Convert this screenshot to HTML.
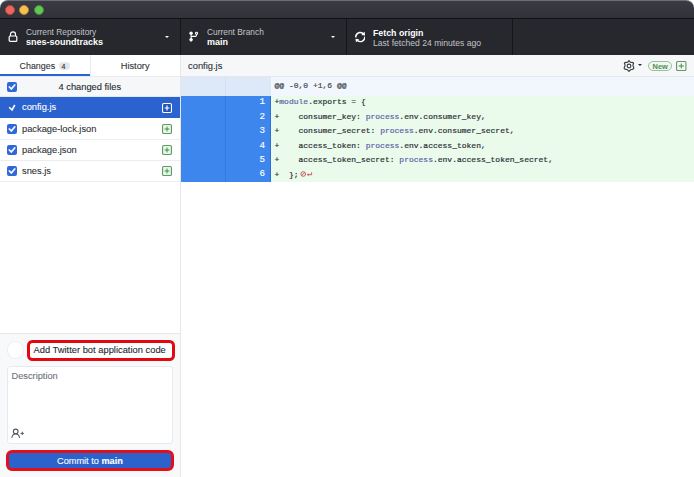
<!DOCTYPE html>
<html><head><meta charset="utf-8">
<style>
*{box-sizing:border-box;margin:0;padding:0}
html,body{width:694px;height:477px;overflow:hidden;background:#fff;font-family:"Liberation Sans",sans-serif}
.abs{position:absolute}
#titlebar{left:0;top:0;width:694px;height:18px;background:linear-gradient(#3a3b43,#30313a);border-top:1px solid #6c6d73;border-radius:8px 8px 0 0}
.tl{position:absolute;top:4.2px;width:10px;height:10px;border-radius:50%}
#toolbar{left:0;top:18px;width:694px;height:37px;background:#26282d;border-top:1px solid #121215}
.div{position:absolute;top:0;width:1px;height:36px;background:#141518}
.tb-t1{position:absolute;color:#c2c4c8;font-size:8.4px;white-space:nowrap}
.tb-t2{position:absolute;color:#fff;font-size:9px;font-weight:bold;white-space:nowrap}
.caret{position:absolute;width:0;height:0;border-left:3px solid transparent;border-right:3px solid transparent;border-top:3px solid #fff}
#left{left:0;top:55px;width:180px;height:422px;background:#fff}
#border{left:180px;top:55px;width:1px;height:422px;background:#e6e7ea}
.txt{position:absolute;white-space:nowrap;-webkit-text-stroke:0.1px currentColor}
.cb{position:absolute;width:9.7px;height:10.3px;background:#3068dc;border-radius:2px}
.cb svg{position:absolute;left:0;top:0}
.plus{position:absolute;width:10px;height:10px;border:1.1px solid #5f9a62;border-radius:1.5px;background:#e9f6ea}
.plus:before{content:"";position:absolute;left:1.6px;top:3.4px;width:4.6px;height:1.2px;background:#3f9a48}
.plus:after{content:"";position:absolute;left:3.3px;top:1.7px;width:1.2px;height:4.6px;background:#3f9a48}
.plus.sel{border-color:#fff;background:#2353b8}
.plus.sel:before,.plus.sel:after{background:#fff}
.row{position:absolute;left:0;width:180px;height:21px;border-bottom:1px solid #ebedf0}
.code{position:absolute;left:274.5px;font-family:"Liberation Mono",monospace;font-size:8px;color:#2c3035;white-space:pre;-webkit-text-stroke:0.2px currentColor}
.ln{position:absolute;left:226px;width:39px;text-align:right;font-family:"Liberation Mono",monospace;font-size:9.2px;color:#fff;-webkit-text-stroke:0.15px #fff}
.kw{color:#5f5fa8}
</style></head><body>
<div id="titlebar" class="abs">
  <div class="tl" style="left:5.2px;background:#f0665c;border:0.6px solid #b8473e"></div>
  <div class="tl" style="left:19px;background:#f5c04f;border:0.6px solid #b98a2a"></div>
  <div class="tl" style="left:33.5px;background:#62c554;border:0.6px solid #3e8f33"></div>
</div>
<div id="toolbar" class="abs">
  <!-- repo -->
  <svg class="abs" style="left:8px;top:12px" width="10" height="11" viewBox="0 0 10 11"><path d="M2.5 5V3.3a2.5 2.5 0 0 1 5 0V5" fill="none" stroke="#fff" stroke-width="1.2"/><rect x="1.2" y="5" width="7.6" height="5.4" rx="1" fill="none" stroke="#fff" stroke-width="1.2"/></svg>
  <div class="tb-t1" style="left:26px;top:8.2px">Current Repository</div>
  <div class="tb-t2" style="left:26px;top:17.6px">snes-soundtracks</div>
  <div class="caret" style="left:164.8px;top:16.8px;border-left-width:2.3px;border-right-width:2.3px;border-top-width:2.6px"></div>
  <div class="div" style="left:180px"></div>
  <!-- branch -->
  <svg class="abs" style="left:187.9px;top:12.1px" width="11.6" height="11.1" viewBox="0 0 16 16" preserveAspectRatio="none"><path fill="#fff" d="M9.5 3.25a2.25 2.25 0 1 1 3 2.122V6A2.5 2.5 0 0 1 10 8.5H6a1 1 0 0 0-1 1v1.128a2.251 2.251 0 1 1-1.5 0V5.372a2.25 2.25 0 1 1 1.5 0v1.836A2.493 2.493 0 0 1 6 7h4a1 1 0 0 0 1-1v-.628A2.25 2.25 0 0 1 9.5 3.25Zm-6 0a.75.75 0 1 0 1.5 0 .75.75 0 0 0-1.5 0Zm8.25-.75a.75.75 0 1 0 0 1.5.75.75 0 0 0 0-1.5ZM4.25 12a.75.75 0 1 0 0 1.5.75.75 0 0 0 0-1.5Z"/><circle cx="4.25" cy="3.25" r="1.6" fill="#fff"/><circle cx="4.25" cy="12.75" r="1.6" fill="#fff"/></svg>
  <div class="tb-t1" style="left:207px;top:8.2px">Current Branch</div>
  <div class="tb-t2" style="left:207px;top:17.6px">main</div>
  <div class="caret" style="left:330.8px;top:16.8px;border-left-width:2.3px;border-right-width:2.3px;border-top-width:2.6px"></div>
  <div class="div" style="left:346px"></div>
  <!-- fetch -->
  <svg class="abs" style="left:354.6px;top:11.2px" width="10.6" height="14.1" viewBox="0 0 12 16"><path fill="#fff" d="M10.24 7.4a4.15 4.15 0 0 1-1.2 3.6 4.346 4.346 0 0 1-5.41.54L4.8 10.4.5 9.8l.6 4.2 1.31-1.26c2.36 1.74 5.7 1.570 7.84-.54a5.876 5.876 0 0 0 1.740-4.46l-1.75-.34zM2.96 5a4.346 4.346 0 0 1 5.41-.54L7.2 5.6l4.3.6-.6-4.2-1.31 1.26c-2.36-1.74-5.7-1.57-7.85.54C.5 5.030-.06 6.650.01 8.260l1.75.35A4.17 4.17 0 0 1 2.96 5z"/></svg>
  <div class="tb-t2" style="left:373px;top:8.8px;font-size:8.8px">Fetch origin</div>
  <div class="tb-t1" style="left:373px;top:18.7px;font-size:8.6px">Last fetched 24 minutes ago</div>
  <div class="div" style="left:512px"></div>
</div>

<div id="left" class="abs">
  <!-- tabs -->
  <div class="abs" style="left:0;top:0;width:180px;height:22px;background:#fff;border-bottom:1.3px solid #e9eaed"></div>
  <div class="abs" style="left:0;top:18.8px;width:90px;height:2.2px;background:#2c63d2"></div>
  <div class="abs" style="left:89.5px;top:0;width:1px;height:21px;background:#e8eaed"></div>
  <div class="txt" style="left:19.6px;top:5.7px;font-size:8.9px;color:#2f3337">Changes</div>
  <div class="abs" style="left:58.6px;top:7.3px;width:11px;height:8px;border-radius:4px;background:#e4e6e9"></div>
  <div class="txt" style="left:61.5px;top:7.5px;font-size:7px;color:#24292e">4</div>
  <div class="txt" style="left:120.7px;top:5.8px;font-size:9.3px;color:#2f3337">History</div>
  <!-- header -->
  <div class="abs" style="left:0;top:22px;width:180px;height:20px;background:#f6f7f9;border-bottom:1px solid #e6e8eb"></div>
  <div class="cb" style="left:7px;top:26.7px"><svg width="10" height="10" viewBox="0 0 10 10"><path d="M2.4 5.0l1.9 2.0 3.4-4.0" fill="none" stroke="#f4fbff" stroke-width="1.8" stroke-linecap="round" stroke-linejoin="round"/></svg></div>
  <div class="txt" style="left:58.5px;top:26.5px;font-size:9.3px;color:#24292e">4 changed files</div>
  <!-- rows -->
  <div class="row" style="top:42px;background:#2a62d0;border-bottom:none"></div>
  <svg class="abs" style="left:7px;top:47.2px" width="10" height="10" viewBox="0 0 10 10"><path d="M2.2 5.2l2.8 2.8 2.8-5" fill="none" stroke="#fff" stroke-width="1.6"/></svg>
  <div class="txt" style="left:22px;top:47.4px;font-size:9.3px;color:#fff">config.js</div>
  <svg class="abs" style="left:162px;top:48px" width="10" height="10" viewBox="0 0 10 10"><rect x="0.55" y="0.55" width="8.9" height="8.9" rx="1.3" fill="#2353b8" stroke="#fff" stroke-width="1.1"/><path d="M5.0 2.6V7.4M2.6 5.0H7.4" stroke="#fff" stroke-width="1.2"/></svg>
  <div class="row" style="top:63.5px"></div>
  <div class="cb" style="left:7px;top:68.7px"><svg width="10" height="10" viewBox="0 0 10 10"><path d="M2.4 5.0l1.9 2.0 3.4-4.0" fill="none" stroke="#f4fbff" stroke-width="1.8" stroke-linecap="round" stroke-linejoin="round"/></svg></div>
  <div class="txt" style="left:22px;top:68.6px;font-size:9.3px;color:#2f3337">package-lock.json</div>
  <svg class="abs" style="left:162px;top:69px" width="10" height="10" viewBox="0 0 10 10"><rect x="0.55" y="0.55" width="8.9" height="8.9" rx="1.3" fill="#e9f6ea" stroke="#5f9a62" stroke-width="1.1"/><path d="M5.0 2.6V7.4M2.6 5.0H7.4" stroke="#3f8f47" stroke-width="1.0"/></svg>
  <div class="row" style="top:84.5px"></div>
  <div class="cb" style="left:7px;top:89.7px"><svg width="10" height="10" viewBox="0 0 10 10"><path d="M2.4 5.0l1.9 2.0 3.4-4.0" fill="none" stroke="#f4fbff" stroke-width="1.8" stroke-linecap="round" stroke-linejoin="round"/></svg></div>
  <div class="txt" style="left:22px;top:89.6px;font-size:9.3px;color:#2f3337">package.json</div>
  <svg class="abs" style="left:162px;top:90px" width="10" height="10" viewBox="0 0 10 10"><rect x="0.55" y="0.55" width="8.9" height="8.9" rx="1.3" fill="#e9f6ea" stroke="#5f9a62" stroke-width="1.1"/><path d="M5.0 2.6V7.4M2.6 5.0H7.4" stroke="#3f8f47" stroke-width="1.0"/></svg>
  <div class="row" style="top:105.5px"></div>
  <div class="cb" style="left:7px;top:110.7px"><svg width="10" height="10" viewBox="0 0 10 10"><path d="M2.4 5.0l1.9 2.0 3.4-4.0" fill="none" stroke="#f4fbff" stroke-width="1.8" stroke-linecap="round" stroke-linejoin="round"/></svg></div>
  <div class="txt" style="left:22px;top:110.6px;font-size:9.3px;color:#2f3337">snes.js</div>
  <svg class="abs" style="left:162px;top:111px" width="10" height="10" viewBox="0 0 10 10"><rect x="0.55" y="0.55" width="8.9" height="8.9" rx="1.3" fill="#e9f6ea" stroke="#5f9a62" stroke-width="1.1"/><path d="M5.0 2.6V7.4M2.6 5.0H7.4" stroke="#3f8f47" stroke-width="1.0"/></svg>

  <!-- commit area -->
  <div class="abs" style="left:0;top:278.2px;width:180px;height:144px;background:#f8f9fa;border-top:1px solid #e6e7e9"></div>
  <div class="abs" style="left:7px;top:286px;width:16.5px;height:17.5px;border-radius:50%;background:#fff;border:1px solid #eceef1"></div>
  <div class="abs" style="left:26.9px;top:284.8px;width:148.1px;height:20.8px;border:3.4px solid #e3070f;border-radius:5.5px;background:#fff"></div>
  <div class="txt" style="left:33.5px;top:290.3px;font-size:9.35px;color:#24292e">Add Twitter bot application code</div>
  <div class="abs" style="left:7px;top:310.8px;width:165.5px;height:78px;border:1px solid #e8eaed;border-radius:3px;background:#fff"></div>
  <div class="txt" style="left:11.5px;top:316px;font-size:9.25px;color:#6d7278">Description</div>
  <svg class="abs" style="left:11px;top:373px" width="14" height="11" viewBox="0 0 14 11"><circle cx="4.7" cy="3.4" r="2.3" fill="none" stroke="#555a60" stroke-width="1.1"/><path d="M0.9 9.4C1.3 6.9 2.8 6 4.7 6S8.1 6.9 8.5 9.4" fill="none" stroke="#555a60" stroke-width="1.1" stroke-linecap="round"/><path d="M9.6 5.4H12.9M11.25 3.75V7.05" stroke="#555a60" stroke-width="1"/></svg>
  <div class="abs" style="left:6.4px;top:395.3px;width:168px;height:20.9px;border:3.6px solid #e3101a;border-radius:6px;background:#2b62cc"></div>
  <div class="txt" style="left:57px;top:400.8px;font-size:9.2px;color:#fff;-webkit-text-stroke:0.1px #fff">Commit to <b>main</b></div>
</div>
<div id="border" class="abs"></div>

<!-- diff -->
<div class="abs" style="left:181px;top:55px;width:513px;height:22px;background:#f6f7f9;border-bottom:1px solid #e4e6ea"></div>
<div class="txt" style="left:188px;top:60px;font-size:9.4px;color:#2f3337">config.js</div>
<svg class="abs" style="left:622.6px;top:59.7px" width="12" height="12" viewBox="0 0 12 12"><path d="M6 0.7Q7.2 2.4 8.1 2.5Q10.2 2.2 10.6 3.35Q9.7 5.2 10.1 6Q11.1 7.8 10.6 8.65Q9.1 9.6 8.1 9.5Q6.9 10.3 6 11.3Q5.1 10.3 3.9 9.5Q2.9 9.6 1.4 8.65Q0.9 7.8 1.9 6Q2.3 5.2 1.4 3.35Q1.8 2.2 3.9 2.5Q4.8 2.4 6 0.7Z" fill="none" stroke="#3a3f45" stroke-width="1.2" stroke-linejoin="round"/><circle cx="6" cy="6" r="1.9" fill="none" stroke="#3a3f45" stroke-width="1.15"/></svg>
<div class="caret" style="left:638.4px;top:64.2px;border-top-color:#24292e;border-left-width:2.6px;border-right-width:2.6px;border-top-width:2.7px"></div>
<div class="abs" style="left:648.2px;top:60.6px;width:23.6px;height:10.8px;border:1px solid #9cbf9f;border-radius:5.4px;background:#eef8ef"></div>
<div class="txt" style="left:652.6px;top:62px;font-size:7.4px;color:#5a8f5f;font-weight:bold">New</div>
<svg class="abs" style="left:676px;top:61px" width="10.5" height="10" viewBox="0 0 10.5 10"><rect x="0.55" y="0.55" width="9.4" height="8.9" rx="1" fill="#eef8ef" stroke="#6f8f72" stroke-width="1.1"/><path d="M5.25 2.6V7.4M2.6 5.0H7.9" stroke="#3f8f47" stroke-width="1.0"/></svg>

<!-- hunk header -->
<div class="abs" style="left:181px;top:77px;width:44px;height:18.5px;background:#dde9f9"></div>
<div class="abs" style="left:225px;top:77px;width:1px;height:18.5px;background:#d3e1f5"></div>
<div class="abs" style="left:226px;top:77px;width:44.5px;height:18.5px;background:#dde9f9"></div>
<div class="abs" style="left:270.5px;top:77px;width:423.5px;height:18.5px;background:#f2f7fd"></div>
<div class="code" style="top:81px;color:#444b52">@@ -0,0 +1,6 @@</div>
<!-- gutter -->
<div class="abs" style="left:181px;top:95.5px;width:89.5px;height:86.5px;background:#3d86ee"></div>
<div class="abs" style="left:225px;top:95.5px;width:1px;height:86.5px;background:#3479e2"></div>
<div class="abs" style="left:269.5px;top:95.5px;width:1px;height:86.5px;background:#2f6fd6"></div>
<div class="abs" style="left:270.5px;top:95.5px;width:423.5px;height:86.5px;background:#eafbec"></div>
<div class="ln" style="top:96.20px">1</div>
<div class="ln" style="top:110.65px">2</div>
<div class="ln" style="top:125.10px">3</div>
<div class="ln" style="top:139.55px">4</div>
<div class="ln" style="top:154.00px">5</div>
<div class="ln" style="top:168.45px">6</div>
<div class="code" style="top:97.10px">+<span class="kw">module</span>.exports = {</div>
<div class="code" style="top:111.60px">+    consumer_key: <span class="kw">process</span>.env.consumer_key,</div>
<div class="code" style="top:126.10px">+    consumer_secret: <span class="kw">process</span>.env.consumer_secret,</div>
<div class="code" style="top:140.60px">+    access_token: <span class="kw">process</span>.env.access_token,</div>
<div class="code" style="top:155.10px">+    access_token_secret: <span class="kw">process</span>.env.access_token_secret,</div>
<div class="code" style="top:169.60px">+  };</div>
<svg class="abs" style="left:300px;top:170.3px" width="14" height="8" viewBox="0 0 14 8"><circle cx="3.2" cy="4" r="2.3" fill="none" stroke="#c9545f" stroke-width="0.95"/><path d="M1.6 5.6L4.8 2.4" stroke="#c9545f" stroke-width="0.95"/><path d="M11.6 2.4V4.7H7.6" fill="none" stroke="#c9545f" stroke-width="1"/><path d="M8.6 3.3L6.9 4.7 8.6 6.1z" fill="#c9545f"/></svg>
</body></html>
